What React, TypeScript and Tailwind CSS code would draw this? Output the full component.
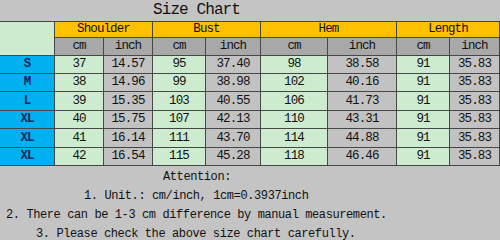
const cols = ["cm", "inch", "cm", "inch", "cm", "inch", "cm", "inch"];

const rows = [
  ["S", "37", "14.57", "95", "37.40", "98", "38.58", "91", "35.83"],
  ["M", "38", "14.96", "99", "38.98", "102", "40.16", "91", "35.83"],
  ["L", "39", "15.35", "103", "40.55", "106", "41.73", "91", "35.83"],
  ["XL", "40", "15.75", "107", "42.13", "110", "43.31", "91", "35.83"],
  ["XL", "41", "16.14", "111", "43.70", "114", "44.88", "91", "35.83"],
  ["XL", "42", "16.54", "115", "45.28", "118", "46.46", "91", "35.83"],
];

const cell = "flex items-center justify-center border-r border-b border-[#474747]";

export default function App() {
  return (
    <div className="w-[500px] h-[240px] overflow-hidden bg-[#c4c4c4] text-[#111] font-['Liberation_Mono',monospace]">
      <div className="h-[21px] pl-[153px] text-[16px] leading-[21px] tracking-[-0.9px]">Size Chart</div>

      <div className="grid grid-cols-[55px_49px_49px_53px_55px_67px_69px_53px_50px] grid-rows-[16px_18px_18px_18px_19px_18px_19px_18px] text-[12.5px] tracking-[-0.9px] border-t border-[#474747]">
        <div className={`${cell} row-span-2 bg-[#cdeccf]`}></div>
        <div className={`${cell} col-span-2 bg-[#ffc000]`}>Shoulder</div>
        <div className={`${cell} col-span-2 bg-[#ffc000]`}>Bust</div>
        <div className={`${cell} col-span-2 bg-[#ffc000]`}>Hem</div>
        <div className={`${cell} col-span-2 bg-[#ffc000]`}>Length</div>

        {cols.map((c, i) => (
          <div key={i} className={`${cell} bg-[#a8a8a8]`}>{c}</div>
        ))}

        {rows.map((r, ri) =>
          r.map((v, ci) => (
            <div
              key={ri + "-" + ci}
              className={`${cell} ${
                ci === 0 ? "bg-[#00b0f0] text-[#15285c] font-bold" : ci % 2 === 1 ? "bg-[#cdeccf]" : "bg-[#c2c2c2]"
              }`}
            >
              {v}
            </div>
          ))
        )}
      </div>

      <div className="pt-[2px] text-[12px] leading-[19px] tracking-[-0.4px] whitespace-pre">
        <div className="pl-[163px]">Attention:</div>
        <div className="pl-[84px]">1. Unit.: cm/inch, 1cm=0.3937inch</div>
        <div className="pl-[6px]">2. There can be 1-3 cm difference by manual measurement.</div>
        <div className="pl-[36px]">3. Please check the above size chart carefully.</div>
      </div>
    </div>
  );
}
